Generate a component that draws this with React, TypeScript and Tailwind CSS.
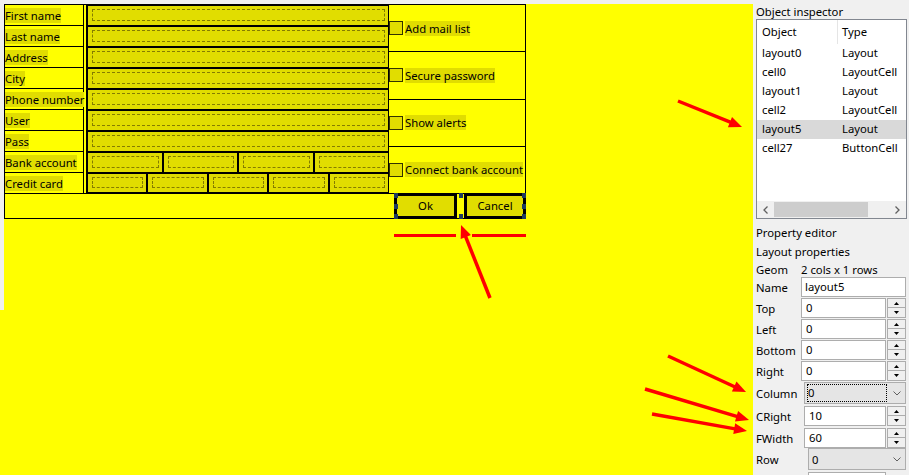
import React from "react";

const labels = [
  "First name",
  "Last name",
  "Address",
  "City",
  "Phone number",
  "User",
  "Pass",
  "Bank account",
  "Credit card",
];

// how many entry boxes each form row holds
const fieldCounts = [1, 1, 1, 1, 1, 1, 1, 4, 5];

const checks = ["Add mail list", "Secure password", "Show alerts", "Connect bank account"];

const objects = [
  { name: "layout0", type: "Layout" },
  { name: "cell0", type: "LayoutCell" },
  { name: "layout1", type: "Layout" },
  { name: "cell2", type: "LayoutCell" },
  { name: "layout5", type: "Layout" },
  { name: "cell27", type: "ButtonCell" },
];

const Field = () => (
  <div className="flex-1 min-w-0 h-full border border-black bg-[#e1dd00] pl-[4px] pr-[3px] pt-[3px] pb-[4px]">
    <div className="h-full border border-dashed border-[#857d00]" />
  </div>
);

const Handle = ({ className }: { className: string }) => (
  <span className={`absolute w-[4px] h-[5px] bg-[#213b5e] ${className}`} />
);

const FormTable = () => (
  <div className="ml-[4px] w-[522px] border border-black flex flex-col">
    <div className="flex h-[188px]">
      <div className="w-[79px] border-r border-black flex flex-col">
        {labels.map((l, i) => (
          <div
            key={l}
            className={`flex items-center shrink-0 ${i < 8 ? "h-[21px] border-b border-black" : "h-[20px]"}`}
          >
            <span className="bg-[#e1dd00] leading-[15px] whitespace-nowrap">{l}</span>
          </div>
        ))}
      </div>
      <div className="w-[305px] pl-[2px] flex">
        <div className="flex-1 border-l border-black flex flex-col">
          {fieldCounts.map((n, i) => (
            <div key={i} className={`flex shrink-0 ${i < 8 ? "h-[21px]" : "h-[20px]"}`}>
              {Array.from({ length: n }).map((_, j) => (
                <Field key={j} />
              ))}
            </div>
          ))}
        </div>
      </div>
      <div className="flex-1 flex flex-col">
        {checks.map((c, i) => (
          <div key={c} className={`flex-1 flex items-center ${i < 3 ? "border-b border-black" : ""}`}>
            <div className="w-[14px] h-[14px] shrink-0 border border-[#333300] bg-[#e1dd00]" />
            <span className="ml-[2px] bg-[#e1dd00] leading-[15px] whitespace-nowrap">{c}</span>
          </div>
        ))}
      </div>
    </div>
    <div className="h-[25px] border-t border-black flex justify-end">
      <div className="relative flex gap-[7px] h-[26px] -mt-[1px] -mr-[1px]">
        <button className="w-[63px] h-full border-[3px] border-black bg-[#e1dd00] leading-none">Ok</button>
        <button className="w-[62px] h-full border-[3px] border-black bg-[#e1dd00] leading-none">Cancel</button>
        <Handle className="left-0 top-0" />
        <Handle className="left-[65px] top-0" />
        <Handle className="right-0 top-0" />
        <Handle className="left-0 top-[11px]" />
        <Handle className="right-0 top-[11px]" />
        <Handle className="left-0 bottom-0" />
        <Handle className="left-[65px] bottom-0" />
        <Handle className="right-0 bottom-0" />
      </div>
    </div>
  </div>
);

const Spinner = () => (
  <div className="ml-[1px] w-[19px] h-[20px] flex flex-col">
    <div className="h-[10px] border border-[#adadad] bg-[#f0f0f0] flex items-center justify-center">
      <svg width="5" height="3" viewBox="0 0 5 3">
        <polygon points="0,3 2.5,0 5,3" fill="#000" />
      </svg>
    </div>
    <div className="h-[10px] border border-t-0 border-[#adadad] bg-[#f0f0f0] flex items-center justify-center">
      <svg width="5" height="3" viewBox="0 0 5 3">
        <polygon points="0,0 5,0 2.5,3" fill="#000" />
      </svg>
    </div>
  </div>
);

const Chevron = () => (
  <svg width="8" height="5" viewBox="0 0 8 5" className="ml-auto mr-[4px] shrink-0">
    <polyline points="0.5,0.5 4,4 7.5,0.5" fill="none" stroke="#606060" strokeWidth="1" />
  </svg>
);

const SpinRow = ({
  label,
  value,
  labelW,
  inputW,
  className,
}: {
  label: string;
  value: string;
  labelW: string;
  inputW: string;
  className: string;
}) => (
  <div className={`flex items-center h-[20px] shrink-0 ${className}`}>
    <div className={`${labelW} leading-[15px]`}>{label}</div>
    <div className={`${inputW} h-[20px] border border-[#adadad] bg-white pl-[4px] leading-[18px]`}>{value}</div>
    <Spinner />
  </div>
);

const Panel = () => (
  <div className="w-[156px] pl-[3px] flex flex-col">
    <div className="h-[15px] leading-[15px] shrink-0">Object inspector</div>
    <div className="w-[151px] h-[200px] shrink-0 border border-[#828790] bg-white flex flex-col">
      <div className="h-[24px] flex shrink-0">
        <div className="w-[81px] h-full border-r border-[#e5e5e5] pl-[5px] flex items-center">Object</div>
        <div className="pl-[4px] flex items-center">Type</div>
      </div>
      {objects.map((o) => (
        <div
          key={o.name}
          className={`h-[19px] flex items-center shrink-0 ${o.name === "layout5" ? "bg-[#d9d9d9]" : ""}`}
        >
          <div className="w-[81px] pl-[5px]">{o.name}</div>
          <div className="pl-[4px]">{o.type}</div>
        </div>
      ))}
      <div className="flex-1" />
      <div className="h-[17px] flex bg-[#f0f0f0] shrink-0">
        <div className="w-[17px] flex items-center justify-center">
          <svg width="5" height="8" viewBox="0 0 5 8">
            <polyline points="4.5,0.5 1,4 4.5,7.5" fill="none" stroke="#606060" strokeWidth="1.3" />
          </svg>
        </div>
        <div className="flex-1 flex items-center">
          <div className="w-[94px] h-[15px] bg-[#cdcdcd]" />
        </div>
        <div className="w-[17px] flex items-center justify-center">
          <svg width="5" height="8" viewBox="0 0 5 8">
            <polyline points="0.5,0.5 4,4 0.5,7.5" fill="none" stroke="#606060" strokeWidth="1.3" />
          </svg>
        </div>
      </div>
    </div>
    <div className="mt-[6px] h-[15px] leading-[15px] shrink-0">Property editor</div>
    <div className="mt-[4px] h-[15px] leading-[15px] shrink-0">Layout properties</div>
    <div className="mt-[3px] h-[15px] leading-[15px] flex shrink-0">
      <div className="w-[45px]">Geom</div>
      <div>2 cols x 1 rows</div>
    </div>
    <div className="flex items-center h-[20px] shrink-0">
      <div className="w-[45px] leading-[15px]">Name</div>
      <div className="w-[105px] h-[20px] border border-[#adadad] bg-white pl-[3px] leading-[18px]">layout5</div>
    </div>
    <SpinRow label="Top" value="0" labelW="w-[45px]" inputW="w-[85px]" className="mt-[1px]" />
    <SpinRow label="Left" value="0" labelW="w-[45px]" inputW="w-[85px]" className="mt-[1px]" />
    <SpinRow label="Bottom" value="0" labelW="w-[45px]" inputW="w-[85px]" className="mt-[1px]" />
    <SpinRow label="Right" value="0" labelW="w-[45px]" inputW="w-[85px]" className="mt-[1px]" />
    <div className="mt-[1px] flex items-center h-[22px] shrink-0">
      <div className="w-[48px] leading-[15px]">Column</div>
      <div className="w-[102px] h-[22px] border border-[#adadad] bg-[#e5e5e5] flex items-center">
        <div className="ml-[2px] w-[80px] h-[18px] border border-dotted border-black leading-[16px]">0</div>
        <Chevron />
      </div>
    </div>
    <SpinRow label="CRight" value="10" labelW="w-[48px]" inputW="w-[82px]" className="mt-[2px]" />
    <SpinRow label="FWidth" value="60" labelW="w-[48px]" inputW="w-[82px]" className="mt-[2px]" />
    <div className="flex items-center h-[22px] shrink-0">
      <div className="w-[52px] leading-[15px]">Row</div>
      <div className="w-[98px] h-[22px] border border-[#adadad] bg-[#e5e5e5] flex items-center pl-[3px]">
        <span className="leading-[15px]">0</span>
        <Chevron />
      </div>
    </div>
    <div className="mt-[2px] ml-[52px] w-[78px] h-[20px] shrink-0 border border-[#adadad] bg-white" />
  </div>
);

const Arrow = ({ x1, y1, x2, y2 }: { x1: number; y1: number; x2: number; y2: number }) => {
  const len = Math.hypot(x2 - x1, y2 - y1);
  const ux = (x2 - x1) / len;
  const uy = (y2 - y1) / len;
  const hl = 13;
  const hw = 5.5;
  const bx = x2 - ux * hl;
  const by = y2 - uy * hl;
  const pts = `${x2},${y2} ${bx - uy * hw},${by + ux * hw} ${bx + uy * hw},${by - ux * hw}`;
  return (
    <g>
      <line x1={x1} y1={y1} x2={bx + ux} y2={by + uy} stroke="#ff0000" strokeWidth={3.5} />
      <polygon points={pts} fill="#ff0000" />
    </g>
  );
};

const Annotations = () => (
  <svg className="absolute left-0 top-0 pointer-events-none" width="909" height="475">
    <rect x="394" y="234" width="62" height="3" fill="#ff0000" />
    <rect x="472" y="234" width="54" height="3" fill="#ff0000" />
    <Arrow x1={490} y1={298} x2={461} y2={225} />
    <Arrow x1={678} y1={101} x2={742} y2={127} />
    <Arrow x1={668} y1={356} x2={746} y2={392} />
    <Arrow x1={645} y1={389} x2={749} y2={420} />
    <Arrow x1={652} y1={414} x2={747} y2={431} />
  </svg>
);

export default function App() {
  return (
    <div className="relative w-[909px] h-[475px] overflow-hidden bg-[#f0f0f0] font-['Noto_Sans',sans-serif] text-[11.3px] text-black">
      <div className="h-[4px]" />
      <div className="flex h-[471px]">
        <div className="relative w-[753px] bg-[#ffff00]">
          <div className="absolute left-0 top-0 w-[4px] h-[306px] bg-[#f0f0f0]" />
          <FormTable />
        </div>
        <Panel />
      </div>
      <Annotations />
    </div>
  );
}
